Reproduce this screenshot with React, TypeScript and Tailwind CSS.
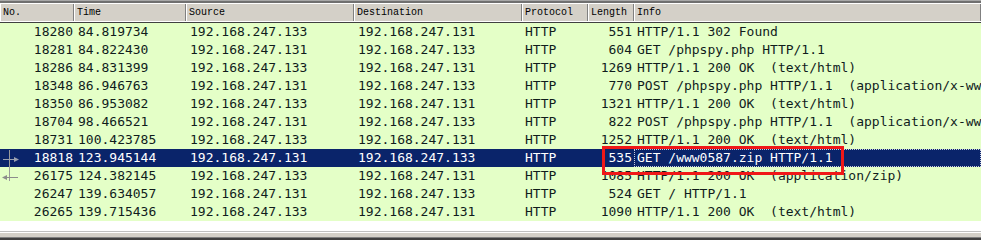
const columns = ["No.", "Time", "Source", "Destination", "Protocol", "Length", "Info"];

const packets = [
  ["18280", "84.819734", "192.168.247.133", "192.168.247.131", "HTTP", "551", "HTTP/1.1 302 Found"],
  ["18281", "84.822430", "192.168.247.131", "192.168.247.133", "HTTP", "604", "GET /phpspy.php HTTP/1.1"],
  ["18286", "84.831399", "192.168.247.133", "192.168.247.131", "HTTP", "1269", "HTTP/1.1 200 OK  (text/html)"],
  ["18348", "86.946763", "192.168.247.131", "192.168.247.133", "HTTP", "770", "POST /phpspy.php HTTP/1.1  (application/x-www-form-urlencoded)"],
  ["18350", "86.953082", "192.168.247.133", "192.168.247.131", "HTTP", "1321", "HTTP/1.1 200 OK  (text/html)"],
  ["18704", "98.466521", "192.168.247.131", "192.168.247.133", "HTTP", "822", "POST /phpspy.php HTTP/1.1  (application/x-www-form-urlencoded)"],
  ["18731", "100.423785", "192.168.247.133", "192.168.247.131", "HTTP", "1252", "HTTP/1.1 200 OK  (text/html)"],
  ["18818", "123.945144", "192.168.247.131", "192.168.247.133", "HTTP", "535", "GET /www0587.zip HTTP/1.1"],
  ["26175", "124.382145", "192.168.247.133", "192.168.247.131", "HTTP", "1085", "HTTP/1.1 200 OK  (application/zip)"],
  ["26247", "139.634057", "192.168.247.131", "192.168.247.133", "HTTP", "524", "GET / HTTP/1.1"],
  ["26265", "139.715436", "192.168.247.133", "192.168.247.131", "HTTP", "1090", "HTTP/1.1 200 OK  (text/html)"],
];

const selectedNo = "18818";

export default function App() {
  return (
    <div className="relative flex flex-col w-[981px] h-[240px] overflow-hidden bg-white">
      {/* header */}
      <div className="h-px bg-[#a8a8a8]" />
      <div className="h-[2px] bg-[#707070]" />
      <div className="grid grid-cols-[74px_112px_168px_168px_66px_46px_1fr] h-[19px] bg-[#d4d0c8] border-t border-white border-b border-[#808080] font-['Liberation_Mono',monospace] text-[10px] text-black">
        {columns.map((c) => (
          <div key={c} className="flex items-center pl-[3px] border-r border-[#808080] shadow-[inset_1px_0_0_#ffffff] overflow-hidden whitespace-nowrap">
            {c}
          </div>
        ))}
      </div>
      <div className="h-px bg-[#404040]" />

      {/* packet list */}
      <div className="flex flex-col font-['DejaVu_Sans_Mono',monospace] text-[13px] leading-[18px]">
        {packets.map((p) => {
          const sel = p[0] === selectedNo;
          return (
            <div
              key={p[0]}
              className={
                sel
                  ? "grid grid-cols-[74px_112px_168px_168px_66px_46px_1fr] h-[18px] bg-[#0a246a] text-white"
                  : "grid grid-cols-[74px_112px_168px_168px_66px_46px_1fr] h-[18px] bg-[#e4ffc7] text-[#101c1c]"
              }
            >
              <div className="text-right pr-[1px]">{p[0]}</div>
              <div className="pl-[4px] whitespace-pre">{p[1]}</div>
              <div className="pl-[4px]">{p[2]}</div>
              <div className="pl-[4px]">{p[3]}</div>
              <div className="pl-[3px]">{p[4]}</div>
              <div className="text-right pr-[2px]">{p[5]}</div>
              <div
                className={
                  sel
                    ? "pl-[2px] whitespace-pre overflow-hidden border border-dotted border-[#c8cce0] leading-[16px]"
                    : "pl-[3px] whitespace-pre overflow-hidden"
                }
              >
                {p[6]}
              </div>
            </div>
          );
        })}
      </div>

      {/* bottom edge */}
      <div className="flex-1 bg-white" />
      <div className="h-px bg-[#c0c0c0]" />
      <div className="h-px bg-white" />
      <div className="h-1 bg-[#d4d0c8]" />
      <div className="h-px bg-[#808080]" />
      <div className="h-[2px] bg-[#404040]" />

      {/* related packet markers */}
      <svg className="absolute left-0 top-[150px]" width="22" height="34" viewBox="0 0 22 34">
        <line x1="9.5" y1="0" x2="9.5" y2="31" stroke="#9a9a9a" strokeWidth="1" />
        <line x1="3" y1="9.5" x2="16" y2="9.5" stroke="#9aa0b0" strokeWidth="1" />
        <polygon points="14,7 19,9.5 14,12" fill="#9aa0b0" />
        <line x1="5" y1="27.5" x2="18" y2="27.5" stroke="#8c8c8c" strokeWidth="1" />
        <polygon points="7,25 2,27.5 7,30" fill="#8c8c8c" />
      </svg>

      {/* annotation */}
      <div className="absolute left-[602px] top-[146px] w-[242px] h-[29px] border-[3px] border-[#f01818]" />
    </div>
  );
}
